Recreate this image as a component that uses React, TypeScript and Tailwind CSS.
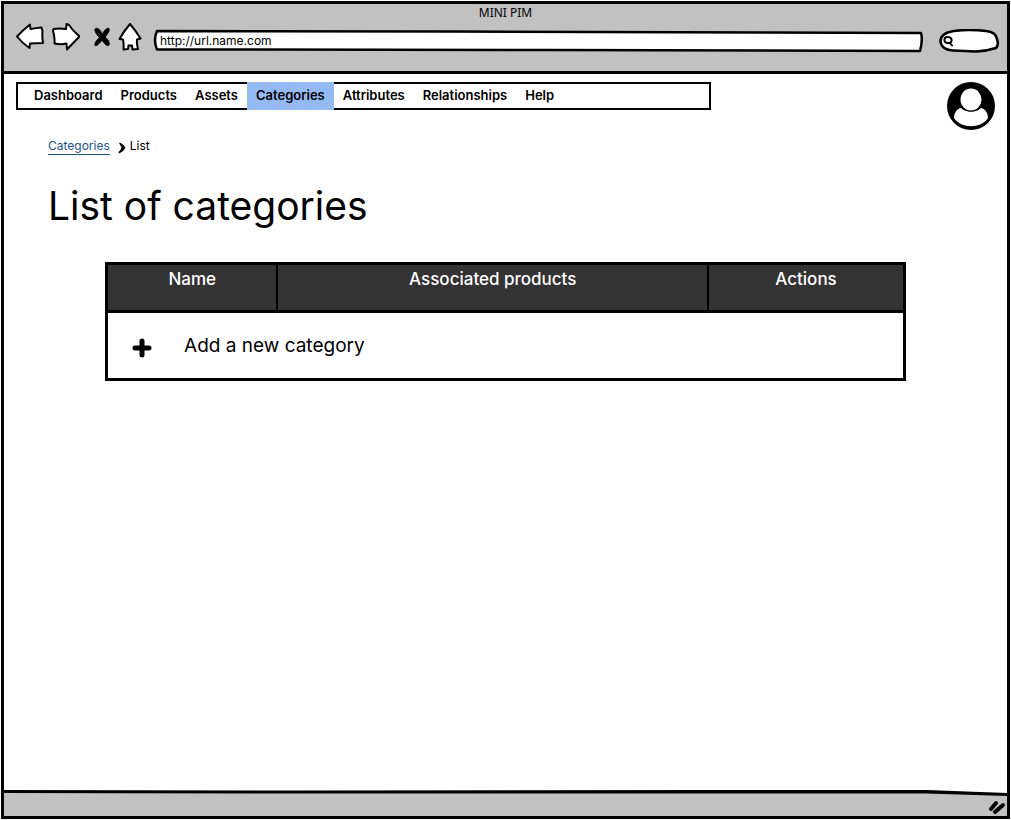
import React from "react";

const navItems = ["Dashboard", "Products", "Assets", "Categories", "Attributes", "Relationships", "Help"];

function BackIcon() {
  return (
    <svg className="h-7 w-7" viewBox="0 0 28 28" fill="#fff" stroke="#000" strokeWidth="2" strokeLinejoin="round" aria-hidden="true">
      <path d="M1 13.5 Q7 7 14 1.5 L14.5 6 Q20 5 25.500 4.500 L26.500 8 Q26 14 27 20 L14 20.500 L13.500 25 Q6 20 1 13.500Z" />
    </svg>
  );
}

function ForwardIcon() {
  return (
    <svg className="h-7 w-7" viewBox="0 0 28 28" fill="#fff" stroke="#000" strokeWidth="2" strokeLinejoin="round" aria-hidden="true">
      <path d="M1.500 6 Q7 5 14 6 L14.500 1 L17 2 Q21 8 27.500 13.500 Q23 18 15 26.500 L14.500 20.500 Q9 22 2.500 20.500 Q3 13 1 8Z" />
    </svg>
  );
}

function StopIcon() {
  return (
    <svg className="h-5 w-4" viewBox="0 0 16 20" fill="#000" stroke="#000" strokeWidth="1" strokeLinejoin="round" aria-hidden="true">
      <path d="M1 2 C3 0 6 2 8.500 7.500 C10 3 13 .5 15 1.500 C16 4 13.500 7 11 10 C14 12 16 16 15 18 C12.500 20 10 16 8 13 C6 16 2.500 19.500 1 18.500 C0 17 2.500 13 5.500 10.500 C2 7 .5 4 1 2Z" />
    </svg>
  );
}

function HomeIcon() {
  return (
    <svg className="h-7 w-6" viewBox="0 0 24 28" fill="#fff" stroke="#000" strokeWidth="2" strokeLinejoin="round" aria-hidden="true">
      <path d="M12 1 Q18 8 22.500 15.500 L19 16.500 Q18.500 21 20 26 L14.500 26.500 L14 22.500 L10.500 22.500 L10 26 L5.500 26.500 Q6 21 5 16.500 L1.500 16 Q6 8 12 1Z" />
    </svg>
  );
}

function BrowserBar() {
  return (
    <header className="border-b-3 border-black bg-[#c1c1c1] pb-5">
      <div className="h-5 text-center font-['Noto_Sans',sans-serif] text-xs leading-[18px]">MINI PIM</div>
      <div className="-mt-px flex h-7 items-center pr-2 pl-3">
        <button type="button" aria-label="Back"><BackIcon /></button>
        <button type="button" aria-label="Forward" className="ml-2"><ForwardIcon /></button>
        <button type="button" aria-label="Stop" className="mr-0.5 ml-3.5"><StopIcon /></button>
        <button type="button" aria-label="Home" className="ml-1.5"><HomeIcon /></button>
        <div className="relative mt-2 ml-3 h-5 min-w-0 flex-1">
          <svg className="absolute inset-0 h-full w-full overflow-visible" viewBox="0 0 770 20" preserveAspectRatio="none" fill="#fff" stroke="#000" strokeWidth="2.5" strokeLinejoin="round" aria-hidden="true">
            <path d="M3 0 L300 .5 L768 2 Q770 9 767 20 L400 19 L3 18.500 Q-1 9 3 0Z" vectorEffect="non-scaling-stroke" />
          </svg>
          <input
            aria-label="Address"
            defaultValue="http://url.name.com"
            className="relative block h-5 w-full bg-transparent px-1.5 pb-0.5 text-xs leading-4 outline-none"
          />
        </div>
        <label className="relative mt-2 ml-4 flex h-6 w-15 items-center pl-1">
          <svg className="absolute inset-0 h-full w-full" viewBox="0 0 60 24" fill="#fff" stroke="#000" strokeWidth="2.5" aria-hidden="true">
            <path d="M15 2 Q30 0 47 2 Q57 3 58 10 Q60 16 57 19 Q48 22 37 22.500 L14 21.500 Q3 21 1.500 13 Q1 4 15 2Z" />
          </svg>
          <svg className="relative h-3 w-3 shrink-0" viewBox="0 0 12 12" fill="none" stroke="#000" strokeWidth="2" strokeLinecap="round" aria-hidden="true">
            <path d="M5 2 C1 1 0 7 4 8 C10 9 10 2 5 2Z M7 8 L9 10.500" />
          </svg>
          <input aria-label="Search" className="relative w-full min-w-0 bg-transparent text-xs outline-none" />
        </label>
      </div>
    </header>
  );
}

export default function App() {
  return (
    <div className="min-h-screen bg-white p-px font-['Inter',sans-serif] text-black">
      <div className="flex min-h-[calc(100vh-2px)] flex-col border-3 border-black">
        <BrowserBar />
        <main className="flex-1 px-3 pt-2">
          <div className="flex items-start justify-between">
            <nav className="flex h-7 w-[71%] border-2 border-black pl-[7px]">
              {navItems.map((item) => (
                <a
                  key={item}
                  href="#"
                  aria-current={item === "Categories" ? "page" : undefined}
                  className={
                    item === "Categories"
                      ? "-my-0.5 bg-[#94baf3] px-[9px] py-0.5 text-[13px] leading-[22px] font-semibold"
                      : "px-[9px] text-[13px] leading-[22px] font-semibold"
                  }
                >
                  {item}
                </a>
              ))}
            </nav>
            <button type="button" aria-label="Account">
              <svg className="h-12 w-12" viewBox="0 0 48 48" aria-hidden="true">
                <circle cx="24" cy="24" r="24" />
                <path d="M14 26 C9 27 7 32 7 36 C14 47 34 47 41 36 C41 32 39 27 34 26 C29 31 19 31 14 26Z" fill="#fff" />
                <ellipse cx="24" cy="17.500" rx="11.500" ry="12" />
                <ellipse cx="24" cy="17.500" rx="10.500" ry="11" fill="#fff" />
              </svg>
            </button>
          </div>
          <div className="pl-8">
            <div className="mt-2 flex h-4 items-center text-xs leading-4">
              <a href="#" className="border-b border-[#1a5494] text-[#1a5494]">Categories</a>
              <svg className="mt-1 ml-2 h-3 w-2" viewBox="0 0 8 12" aria-hidden="true">
                <path d="M1 1 Q3 0 7.500 5.500 Q5 10 1 11.500 L.5 10 Q3 8 3.500 5.500Z" />
              </svg>
              <span className="ml-1">List</span>
            </div>
            <h1 className="mt-7 text-[39px] leading-12">List of categories</h1>
          </div>
          <div className="mt-8 px-[9.1%]">
            <table className="w-full table-fixed border-collapse border-3 border-black">
              <thead className="bg-[#333] text-white">
                <tr className="h-12 align-top text-[17px] leading-6">
                  <th className="w-[21.4%] border-2 border-black pt-0.5 font-medium">Name</th>
                  <th className="border-2 border-black pt-0.5 font-medium">Associated products</th>
                  <th className="w-[24.6%] border-2 border-black pt-0.5 font-medium">Actions</th>
                </tr>
              </thead>
              <tbody>
                <tr className="h-17">
                  <td colSpan={3} className="border-t-3 border-black pl-6">
                    <button type="button" className="flex items-center text-[19px] leading-7">
                      <svg className="mt-1 h-5 w-5" viewBox="0 0 20 20" stroke="#000" strokeWidth="5" strokeLinecap="round" aria-hidden="true">
                        <path d="M10 3V17M3 10H17" />
                      </svg>
                      <span className="ml-8">Add a new category</span>
                    </button>
                  </td>
                </tr>
              </tbody>
            </table>
          </div>
        </main>
        <footer className="relative flex h-6 items-center justify-end bg-[#c1c1c1]">
          <svg className="absolute inset-x-0 -top-0.5 h-1.5 w-full" viewBox="0 0 1000 6" preserveAspectRatio="none" aria-hidden="true">
            <path d="M0 0H920L1000 4V0Z" fill="#fff" />
            <path d="M0 0L300 .5L700 0L920 0L1000 3V6L920 3.500L300 3.500L0 3Z" />
          </svg>
          <svg className="mt-1 h-5 w-5" viewBox="0 0 20 20" stroke="#000" strokeWidth="4" strokeLinecap="round" aria-hidden="true">
            <path d="M4 13L9 7M8 16L16 9" />
          </svg>
        </footer>
      </div>
    </div>
  );
}
